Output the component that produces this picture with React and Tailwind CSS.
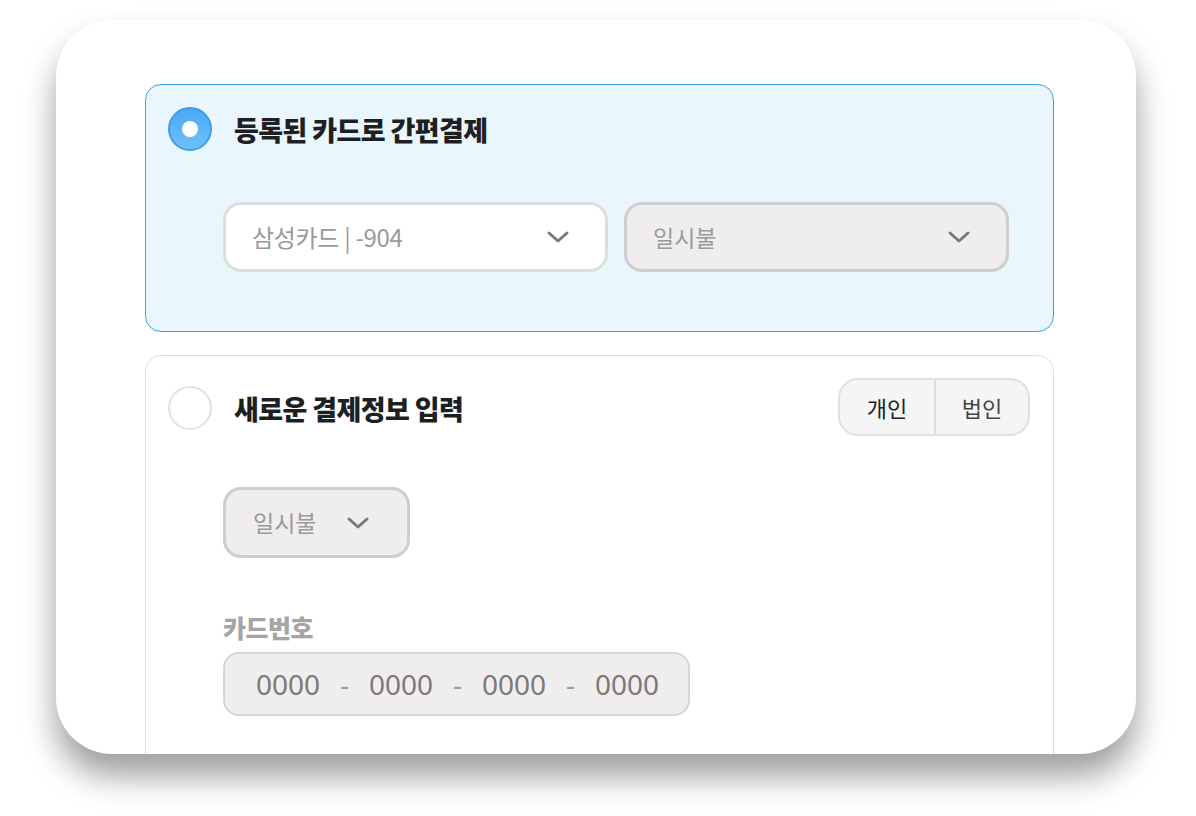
import React from "react";

const font = { fontFamily: '"Noto Sans CJK KR", "Noto Sans", sans-serif' };

function Chevron() {
  return (
    <svg width="24" height="14" viewBox="0 0 24 14" fill="none">
      <path d="M3 3 L12 11 L21 3" stroke="#7a7a7a" strokeWidth="3" strokeLinecap="round" strokeLinejoin="round" />
    </svg>
  );
}

function Dash() {
  return <span className="w-[49px] text-center text-[#9a9a9a]">-</span>;
}

export default function App() {
  return (
    <div className="w-[1196px] h-[816px] bg-white overflow-hidden" style={font}>
      <div className="pt-[20px] pl-[56px]">
        <div className="w-[1080px] h-[734px] rounded-[56px] bg-white overflow-hidden shadow-[0_22px_32px_rgba(0,0,0,0.38)] pt-[64px] pl-[89px]">
          {/* Card 1 */}
          <div className="w-[909px] h-[248px] rounded-[16px] border border-[#35a5e8] bg-[#eaf6fd] pt-[22px] pl-[22px]">
            <div className="flex items-center h-[44px]">
              <div className="w-[44px] h-[44px] rounded-full bg-gradient-to-b from-[#4aa8f4] to-[#6ec0fb] border-2 border-[#3d9de6] flex items-center justify-center">
                <div className="w-[16px] h-[16px] rounded-full bg-white" />
              </div>
              <div className="ml-[22px] text-[27px] font-extrabold text-[#1d1f22] tracking-[-0.6px] leading-none">
                등록된 카드로 간편결제
              </div>
            </div>
            <div className="flex gap-[16px] mt-[51px] ml-[55px]">
              <div className="w-[385px] h-[70px] rounded-[18px] border-[3px] border-[#dedede] bg-white flex items-center justify-between pl-[26px] pr-[35px]">
                <span className="text-[24px] text-[#9a9a9a] tracking-[-0.3px]">삼성카드 | -904</span>
                <Chevron />
              </div>
              <div className="w-[385px] h-[70px] rounded-[18px] border-[3px] border-[#cfcdcd] bg-[#efeded] flex items-center justify-between pl-[26px] pr-[35px]">
                <span className="text-[23px] text-[#9a9a9a]">일시불</span>
                <Chevron />
              </div>
            </div>
          </div>

          {/* Card 2 */}
          <div className="w-[909px] h-[500px] mt-[23px] rounded-[16px] border border-[#dedede] bg-white pt-[22px] pl-[22px] pr-[23px]">
            <div className="flex items-center justify-between">
              <div className="flex items-center pt-[2px]">
                <div className="w-[44px] h-[44px] rounded-full border-2 border-[#e2e2e2] bg-white" />
                <div className="ml-[22px] text-[27px] font-extrabold text-[#1d1f22] tracking-[-0.6px] leading-none">
                  새로운 결제정보 입력
                </div>
              </div>
              <div className="flex h-[58px] rounded-[20px] border-2 border-[#e0e0e0] bg-[#f5f5f5] overflow-hidden">
                <div className="w-[94px] flex items-center justify-center text-[22px] text-[#222]">개인</div>
                <div className="w-[2px] bg-[#dcdcdc]" />
                <div className="w-[92px] flex items-center justify-center text-[22px] text-[#444]">법인</div>
              </div>
            </div>
            <div className="ml-[55px] mt-[51px] w-[187px] h-[71px] rounded-[18px] border-[3px] border-[#cfcdcd] bg-[#efeded] flex items-center pl-[27px] gap-[30px]">
              <span className="text-[23px] text-[#9a9a9a]">일시불</span>
              <Chevron />
            </div>
            <div className="ml-[55px] mt-[57px] text-[25px] font-extrabold text-[#a5a5a5] leading-none tracking-[-0.5px]">카드번호</div>
            <div className="ml-[55px] mt-[12px] w-[467px] h-[64px] rounded-[16px] border-2 border-[#d6d4d4] bg-[#efeded] flex items-center pl-[31px] text-[28px] text-[#7a7a7a]" style={{ fontFamily: '"Noto Sans", "Noto Sans CJK KR", sans-serif' }}>
              <span className="w-[64px]">0000</span>
              <Dash />
              <span className="w-[64px]">0000</span>
              <Dash />
              <span className="w-[64px]">0000</span>
              <Dash />
              <span className="w-[64px]">0000</span>
            </div>
          </div>
        </div>
      </div>
    </div>
  );
}
